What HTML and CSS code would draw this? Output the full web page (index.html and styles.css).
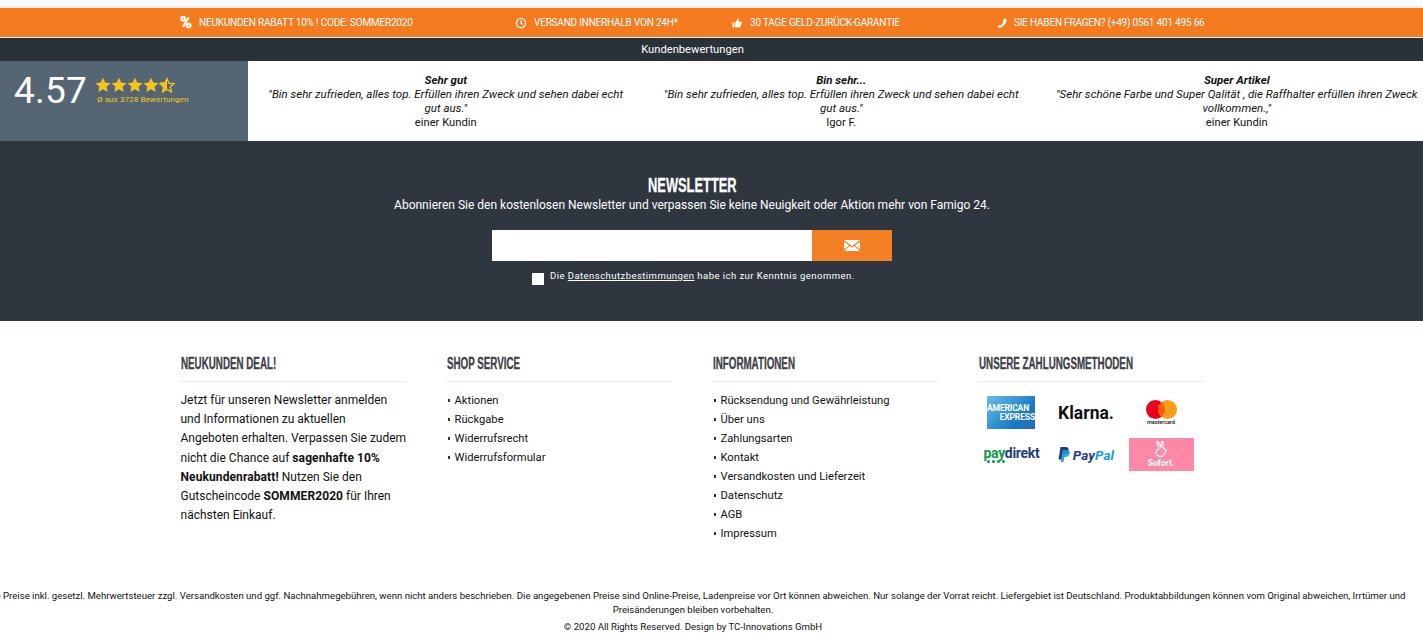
FILE: index.html
```html
<!DOCTYPE html>
<html lang="de">
<head>
    <meta charset="UTF-8">
    <meta name="viewport" content="width=device-width, initial-scale=1.0">
    <title>Famigo 24</title>
    <link rel="stylesheet" href="styles.css">
</head>
<body>

    <div class="top-strip"></div>

    <div class="usp-bar">
        <div class="usp-item">
            <span class="usp-percent">%</span>
            <span>Neukunden Rabatt 10% ! Code: SOMMER2020</span>
        </div>
        <div class="usp-item">
            <svg class="usp-icon" viewBox="0 0 12 12"><circle cx="6" cy="6" r="4.6" fill="none" stroke="#fff" stroke-width="1.3"/><path d="M6 3.2V6.3L8 7.4" fill="none" stroke="#fff" stroke-width="1.1"/></svg>
            <span>Versand innerhalb von 24h*</span>
        </div>
        <div class="usp-item">
            <svg class="usp-icon" viewBox="0 0 12 12"><path d="M1.5 5.5H3.4V10.5H1.5ZM4.2 5.6C5.4 4.7 6 3.4 6.2 1.6C7.4 1.5 7.9 2.8 7.2 4.6H10C10.9 4.6 11 5.6 10.5 6C10.9 6.5 10.7 7.2 10.2 7.5C10.4 8.1 10.1 8.7 9.6 8.9C9.7 9.7 9.2 10.4 8.4 10.4H6C5.3 10.4 4.8 10.1 4.2 9.8Z" fill="#fff"/></svg>
            <span>30 Tage Geld-Zurück-Garantie</span>
        </div>
        <div class="usp-item">
            <svg class="usp-icon usp-icon-phone" viewBox="0 0 12 12"><path d="M8.6 1.2L10.6 2.5C10.8 6 7 10.6 2.9 10.8C2.2 10.8 1.6 10.4 1.2 9.8L3.4 7.9L4.6 8.5C6 7.7 7 6.2 7.4 4.6L6.6 3.7Z" fill="#fff"/></svg>
            <span>Sie haben Fragen? (+49) 0561 401 495 66</span>
        </div>
    </div>

    <div class="reviews-title">Kundenbewertungen</div>

    <div class="reviews">
        <div class="score-box">
            <div class="score">4.57</div>
            <div class="score-info">
                <div class="stars">
                    <svg viewBox="0 0 24 24"><path class="star" d="M12 1l3.3 7.4 8 .8-6 5.4 1.7 7.9-7-4-7 4 1.7-7.9-6-5.4 8-.8z"/></svg>
                    <svg viewBox="0 0 24 24"><path class="star" d="M12 1l3.3 7.4 8 .8-6 5.4 1.7 7.9-7-4-7 4 1.7-7.9-6-5.4 8-.8z"/></svg>
                    <svg viewBox="0 0 24 24"><path class="star" d="M12 1l3.3 7.4 8 .8-6 5.4 1.7 7.9-7-4-7 4 1.7-7.9-6-5.4 8-.8z"/></svg>
                    <svg viewBox="0 0 24 24"><path class="star" d="M12 1l3.3 7.4 8 .8-6 5.4 1.7 7.9-7-4-7 4 1.7-7.9-6-5.4 8-.8z"/></svg>
                    <svg viewBox="0 0 24 24"><path class="star-line" d="M12 2.5l3 6.8 7.4.8-5.5 5 1.6 7.3-6.500-3.700-6.500 3.700 1.600-7.300-5.500-5 7.400-.8z"/><path class="star" d="M12 1v16.600l-7 4 1.700-7.900-6-5.400 8-.8z"/></svg>
                </div>
                <div class="score-count">Ø aus 3728 Bewertungen</div>
            </div>
        </div>
        <div class="review">
            <strong>Sehr gut</strong>
            <em>"Bin sehr zufrieden, alles top. Erfüllen ihren Zweck und sehen dabei echt gut aus."</em>
            <span>einer Kundin</span>
        </div>
        <div class="review">
            <strong>Bin sehr...</strong>
            <em>"Bin sehr zufrieden, alles top. Erfüllen ihren Zweck und sehen dabei echt gut aus."</em>
            <span>Igor F.</span>
        </div>
        <div class="review">
            <strong>Super Artikel</strong>
            <em>"Sehr schöne Farbe und Super Qalität , die Raffhalter erfüllen ihren Zweck vollkommen.,"</em>
            <span>einer Kundin</span>
        </div>
    </div>

    <section class="newsletter">
        <h2><span class="squeezed">Newsletter</span></h2>
        <p class="newsletter-text">Abonnieren Sie den kostenlosen Newsletter und verpassen Sie keine Neuigkeit oder Aktion mehr von Famigo 24.</p>
        <form class="newsletter-form">
            <input type="text" class="newsletter-input" aria-label="E-Mail">
            <button type="button" class="newsletter-button" aria-label="Anmelden">
                <svg viewBox="0 0 16 11" width="16" height="11"><path d="M0 0H16L8 6ZM0 1.600L5 5.400 0 9.600ZM16 1.600V9.600L11 5.400ZM5.900 6.100L8 7.700 10.100 6.100 16 11H0Z" fill="#fff"/></svg>
            </button>
        </form>
        <div class="privacy">
            <span class="privacy-box"></span>
            <span>Die <a href="#">Datenschutzbestimmungen</a> habe ich zur Kenntnis genommen.</span>
        </div>
    </section>

    <footer class="footer">
        <div class="footer-col">
            <h3><span class="squeezed">Neukunden Deal!</span></h3>
            <p>Jetzt für unseren Newsletter anmelden<br>
            und Informationen zu aktuellen<br>
            Angeboten erhalten. Verpassen Sie zudem<br>
            nicht die Chance auf <b>sagenhafte 10%<br>
            Neukundenrabatt!</b> Nutzen Sie den<br>
            Gutscheincode <b>SOMMER2020</b> für Ihren<br>
            nächsten Einkauf.</p>
        </div>
        <div class="footer-col">
            <h3><span class="squeezed">Shop Service</span></h3>
            <ul>
                <li>Aktionen</li>
                <li>Rückgabe</li>
                <li>Widerrufsrecht</li>
                <li>Widerrufsformular</li>
            </ul>
        </div>
        <div class="footer-col">
            <h3><span class="squeezed">Informationen</span></h3>
            <ul>
                <li>Rücksendung und Gewährleistung</li>
                <li>Über uns</li>
                <li>Zahlungsarten</li>
                <li>Kontakt</li>
                <li>Versandkosten und Lieferzeit</li>
                <li>Datenschutz</li>
                <li>AGB</li>
                <li>Impressum</li>
            </ul>
        </div>
        <div class="footer-col">
            <h3><span class="squeezed">Unsere Zahlungsmethoden</span></h3>
            <div class="payments">
                <div class="pay">
                    <div class="amex"><span>AMERICAN</span><span class="amex-second">EXPRESS</span></div>
                </div>
                <div class="pay klarna">Klarna.</div>
                <div class="pay mastercard">
                    <svg viewBox="0 0 31 19" width="31" height="19"><circle cx="9.500" cy="9.500" r="9.500" fill="#eb001b"/><circle cx="21.500" cy="9.500" r="9.500" fill="#f79e1b"/><path d="M15.500 2.100a9.500 9.500 0 0 1 0 14.800a9.500 9.500 0 0 1 0-14.800z" fill="#ff5f00"/></svg>
                    <span>mastercard</span>
                </div>
                <div class="pay paydirekt">
                    <div class="paydirekt-word"><span class="pay-green">pay</span><span class="pay-navy">direkt</span></div>
                    <div class="pay-dots"><i></i><i></i><i></i><i></i></div>
                </div>
                <div class="pay paypal">
                    <svg viewBox="0 0 12 15" width="12" height="15"><path d="M2.500 0H7.500C10 0 11 1.500 10.500 3.600C10 6 8.300 7.200 6 7.200H4.500L3.600 12.500H0.500Z" fill="#253b80"/><path d="M4.500 3H9C11.300 3 12.300 4.500 11.800 6.500C11.300 8.800 9.600 10 7.400 10H6.400L5.500 15H2.800Z" fill="#179bd7" opacity="0.9"/></svg>
                    <span><b class="pay-navy">Pay</b><b class="pay-blue">Pal</b></span>
                </div>
                <div class="pay">
                    <div class="sofort">
                        <svg viewBox="0 0 14 17" width="14" height="17"><path d="M5 8L3 1.500C3 .5 4.300 .3 4.700 1.200L6.700 6L7.700 .9C8 0 9.300 .2 9.300 1.200L8.700 7L11.500 8.500C12.300 9 12 10 11.500 10.800C10.500 13.500 9.500 15.500 6.500 15.500C3.500 15.500 2 13.500 2 11.300C2 9.500 3 8.300 5 8Z" fill="none" stroke="#fff" stroke-width="1.100"/></svg>
                        <span>Sofort.</span>
                    </div>
                </div>
            </div>
        </div>
    </footer>

    <div class="legal">
        <p>*Alle Preise inkl. gesetzl. Mehrwertsteuer zzgl. Versandkosten und ggf. Nachnahmegebühren, wenn nicht anders beschrieben. Die angegebenen Preise sind Online-Preise, Ladenpreise vor Ort können abweichen. Nur solange der Vorrat reicht. Liefergebiet ist Deutschland. Produktabbildungen können vom Original abweichen, Irrtümer und Preisänderungen bleiben vorbehalten.</p>
        <p class="copyright">© 2020 All Rights Reserved. Design by TC-Innovations GmbH</p>
    </div>

</body>
</html>
```

FILE: styles.css
```css
* {
    margin: 0;
    padding: 0;
    box-sizing: border-box;
}

html,
body {
    overflow-x: hidden;
}

body {
    font-family: Roboto, "Liberation Sans", sans-serif;
    font-size: 12px;
    color: #111;
    background-color: #fff;
}

.top-strip {
    height: 8px;
    background-color: #fafafa;
    border-bottom: 2px solid #ececec;
}

/* orange bar */
.usp-bar {
    display: grid;
    grid-template-columns: 335px 216px 265px auto;
    height: 29px;
    padding-left: 180px;
    align-items: center;
    background-color: #f47b20;
    color: #fff;
    font-size: 10px;
    letter-spacing: -0.2px;
    text-transform: uppercase;
}

.usp-item {
    display: flex;
    align-items: center;
}

.usp-percent {
    width: 19px;
    font-size: 16px;
    font-weight: 900;
    -webkit-text-stroke: 0.4px #fff;
}

.usp-icon {
    width: 12px;
    height: 12px;
    margin-right: 7px;
}

.usp-icon-phone {
    margin-right: 6px;
}

.reviews-title {
    height: 23px;
    margin-top: 1px;
    padding-right: 38px;
    background-color: #2b3138;
    color: #fff;
    font-size: 11.2px;
    line-height: 23px;
    text-align: center;
}

/* reviews */
.reviews {
    display: flex;
    height: 80px;
    overflow: hidden;
}

.score-box {
    flex: 0 0 248px;
    display: flex;
    padding: 10px 0 0 14px;
    background-color: #566573;
    color: #fff;
}

.score {
    font-size: 37px;
    line-height: 40px;
    letter-spacing: 0.2px;
}

.score-info {
    margin: 6px 0 0 8px;
}

.stars {
    display: flex;
    height: 17px;
}

.stars svg {
    width: 16px;
    height: 16px;
}

.star {
    fill: #f5c518;
}

.star-line {
    fill: none;
    stroke: #f5c518;
    stroke-width: 2;
}

.score-count {
    margin: 1px 0 0 2px;
    color: #f5c518;
    font-size: 8px;
    letter-spacing: 0.1px;
}

.review {
    flex: 0 0 395.5px;
    padding: 12px 15px 0;
    text-align: center;
    font-size: 11.5px;
    line-height: 14px;
}

.review strong,
.review em,
.review span {
    display: block;
}

.review strong {
    font-style: italic;
}

.review span {
    font-size: 11.2px;
    line-height: 15px;
}

/* oswald is not around, so the condensed headings are squeezed by hand */
.squeezed {
    display: inline-block;
    transform: scaleX(0.612);
    transform-origin: left center;
    white-space: nowrap;
    -webkit-text-stroke: 0.3px currentColor;
}

/* newsletter */
.newsletter {
    height: 180px;
    padding: 34px 39px 0 0;
    background-color: #2f3640;
    color: #fff;
    text-align: center;
}

.newsletter h2 {
    margin-bottom: 1px;
    font-family: "Liberation Sans", sans-serif;
    font-size: 21px;
    line-height: 20px;
    text-transform: uppercase;
}

.newsletter h2 .squeezed {
    transform-origin: center center;
}

.newsletter-text {
    margin-bottom: 16px;
    font-size: 12px;
    line-height: 18px;
}

.newsletter-form {
    display: flex;
    width: 400px;
    height: 31px;
    margin: 0 auto;
}

.newsletter-input {
    flex: 1;
    border: none;
    background-color: #fff;
}

.newsletter-button {
    display: flex;
    align-items: center;
    justify-content: center;
    width: 80px;
    border: none;
    background-color: #f47f24;
}

.privacy {
    display: flex;
    width: 320px;
    margin: 8px auto 0 auto;
    font-size: 9.5px;
    line-height: 13px;
    letter-spacing: 0.45px;
    text-align: left;
    white-space: nowrap;
}

.privacy a {
    color: #fff;
}

.privacy-box {
    flex: none;
    width: 12px;
    height: 12px;
    margin: 4px 6px 0 0;
    background-color: #fff;
}

/* footer columns */
.footer {
    display: grid;
    grid-template-columns: repeat(4, 226px);
    gap: 40px;
    height: 268px;
    padding: 33px 0 0 180px;
}

.footer-col h3 {
    height: 28px;
    margin-bottom: 9px;
    border-bottom: 1px solid #ececec;
    color: #3c4046;
    font-family: "Liberation Sans", sans-serif;
    font-size: 16px;
    line-height: 20px;
    text-transform: uppercase;
}

.footer-col h3 .squeezed {
    margin-left: 1px;
}

.footer-col p {
    padding-left: 0.5px;
    white-space: nowrap;
    line-height: 19.2px;
}

.footer-col b {
    font-weight: 700;
    letter-spacing: 0.1px;
}

.footer-col ul {
    list-style: none;
}

.footer-col li {
    position: relative;
    padding-left: 8.5px;
    font-size: 11.2px;
    line-height: 19px;
}

.footer-col li::before {
    content: "";
    position: absolute;
    left: 1.5px;
    top: 8px;
    width: 2.5px;
    height: 2.5px;
    background-color: #333;
}

/* payment logos */
.payments {
    display: grid;
    grid-template-columns: repeat(3, 75px);
    grid-auto-rows: 33px;
    row-gap: 9px;
    margin: 14px 0 0 -4.5px;
}

.pay {
    display: flex;
    align-items: center;
    justify-content: center;
}

.amex {
    display: flex;
    flex-direction: column;
    justify-content: center;
    width: 48px;
    height: 33px;
    background: linear-gradient(135deg, #6bbce8, #1479c4 70%, #2a6db5);
    color: #fff;
    font-size: 8.6px;
    font-weight: 700;
    letter-spacing: -0.2px;
    line-height: 9px;
    overflow: hidden;
}

.amex-second {
    text-align: right;
}

.klarna {
    color: #111;
    font-size: 17.5px;
    font-weight: 700;
}

.mastercard {
    flex-direction: column;
}

.mastercard span {
    font-size: 5.5px;
    line-height: 6px;
    font-weight: 500;
}

.paydirekt {
    flex-direction: column;
    align-items: flex-start;
    padding-left: 10px;
}

.paydirekt-word {
    font-size: 14px;
    font-weight: 700;
    line-height: 14px;
    letter-spacing: -0.3px;
}

.pay-green {
    color: #0a9a45;
}

.pay-navy {
    color: #253b80;
}

.pay-blue {
    color: #179bd7;
}

.pay-dots {
    display: flex;
    gap: 2px;
    margin-left: 3px;
}

.pay-dots i {
    width: 3px;
    height: 3px;
    border-radius: 50%;
    background-color: #0a9a45;
}

.paypal {
    gap: 3px;
    font-size: 13.5px;
    font-style: italic;
}

.sofort {
    display: flex;
    flex-direction: column;
    align-items: center;
    width: 65px;
    height: 33px;
    padding-top: 3px;
    background-color: #fd88a8;
    color: #fff;
    font-size: 8.5px;
    font-weight: 700;
    line-height: 10px;
}

/* legal text */
.legal {
    width: 1446px;
    margin-left: -30px;
    font-size: 9.6px;
    text-align: center;
}

.legal p {
    line-height: 14px;
}

.legal .copyright {
    margin-top: 3px;
}
```
